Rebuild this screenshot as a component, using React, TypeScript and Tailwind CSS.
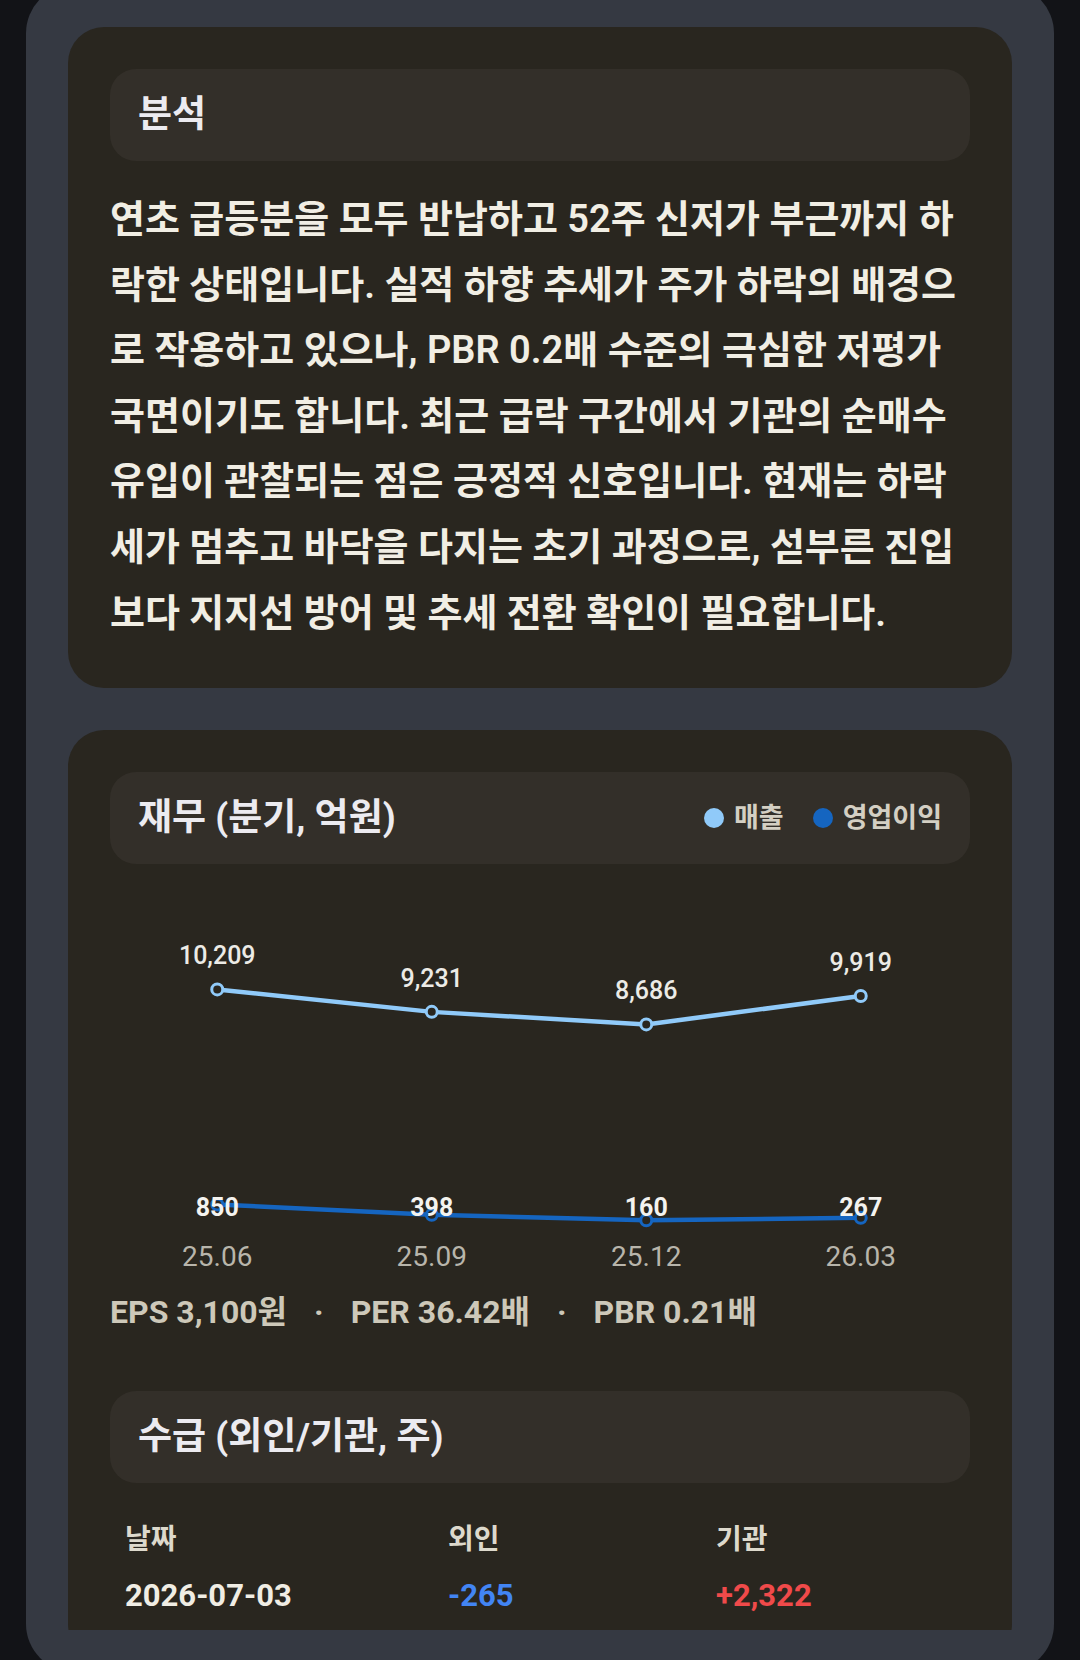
import React from 'react';

const quarters = ['25.06', '25.09', '25.12', '26.03'];
const revenue = [10209, 9231, 8686, 9919];
const opProfit = [850, 398, 160, 267];

const CHART_W = 858;
const CHART_H = 426;
const BASE_Y = 360;
const SCALE = 0.02298;

const xOf = (i: number) => CHART_W / 8 + i * (CHART_W / 4);
const yOf = (v: number) => BASE_Y - v * SCALE;
const fmt = (v: number) => v.toLocaleString('en-US');

const SectionHeader: React.FC<{ title: string; children?: React.ReactNode }> = ({ title, children }) => (
  <div className="flex h-[92px] items-center justify-between rounded-[26px] bg-[#332f29] px-[28px]">
    <h2 className="text-[37px] font-bold text-[#ecebf0]">{title}</h2>
    {children}
  </div>
);

const LegendItem: React.FC<{ color: string; label: string }> = ({ color, label }) => (
  <div className="flex items-center gap-[10px]">
    <span className={`h-[20px] w-[20px] rounded-full ${color}`} />
    <span className="text-[27px] font-bold text-[#d4cfc3]">{label}</span>
  </div>
);

const FinanceChart: React.FC = () => {
  const line = (values: number[]) => values.map((v, i) => `${xOf(i)},${yOf(v)}`).join(' ');

  return (
    <svg width={CHART_W} height={CHART_H} className="block">
      {/* revenue line */}
      <polyline points={line(revenue)} fill="none" stroke="#90caf9" strokeWidth={4.5} strokeLinejoin="round" />
      {revenue.map((v, i) => (
        <circle key={i} cx={xOf(i)} cy={yOf(v)} r={5.5} fill="#29261f" stroke="#90caf9" strokeWidth={3} />
      ))}

      {/* operating profit line */}
      <polyline points={line(opProfit)} fill="none" stroke="#1565c0" strokeWidth={4.5} strokeLinejoin="round" />
      {opProfit.map((v, i) => (
        <circle key={i} cx={xOf(i)} cy={yOf(v)} r={5.5} fill="#29261f" stroke="#1565c0" strokeWidth={3} />
      ))}

      {/* value labels */}
      {revenue.map((v, i) => (
        <text key={i} x={xOf(i)} y={yOf(v) - 34 + 9} textAnchor="middle" fontSize={25} fontWeight={500} fill="#ecebe6">
          {fmt(v)}
        </text>
      ))}
      {opProfit.map((v, i) => (
        <text key={i} x={xOf(i)} y={352} textAnchor="middle" fontSize={25} fontWeight={700} fill="#f4f3ef">
          {fmt(v)}
        </text>
      ))}

      {/* quarter axis */}
      {quarters.map((q, i) => (
        <text key={q} x={xOf(i)} y={402} textAnchor="middle" fontSize={28} fill="#b8b5ab">
          {q}
        </text>
      ))}
    </svg>
  );
};

export default function App() {
  return (
    <div className="h-[1660px] overflow-hidden bg-[#121317] px-[26px] font-[Roboto,'Noto_Sans_CJK_KR',sans-serif]">
      <div className="-mt-[15px] rounded-[48px] bg-[#353942] p-[42px]">
        <div className="flex h-[1603px] flex-col gap-[42px] overflow-hidden">
          {/* Analysis */}
          <section className="shrink-0 rounded-[36px] bg-[#29261f] p-[42px]">
            <SectionHeader title="분석" />
            <p className="mt-[26px] text-[38px] font-semibold leading-[65.6px] text-[#f1eee4]">
              연초 급등분을 모두 반납하고 52주 신저가 부근까지 하락한 상태입니다. 실적 하향 추세가 주가 하락의 배경으로 작용하고 있으나, PBR 0.2배 수준의 극심한 저평가 국면이기도 합니다. 최근 급락 구간에서 기관의 순매수 유입이 관찰되는 점은 긍정적 신호입니다. 현재는 하락세가 멈추고 바닥을 다지는 초기 과정으로, 섣부른 진입보다 지지선 방어 및 추세 전환 확인이 필요합니다.
            </p>
          </section>

          {/* Financials + supply */}
          <section className="shrink-0 rounded-[36px] bg-[#29261f] p-[42px]">
            <SectionHeader title="재무 (분기, 억원)">
              <div className="flex items-center gap-[29px]">
                <LegendItem color="bg-[#90caf9]" label="매출" />
                <LegendItem color="bg-[#1565c0]" label="영업이익" />
              </div>
            </SectionHeader>

            <FinanceChart />

            <div className="flex items-center gap-[27px] text-[32px] font-bold leading-[45px] text-[#cdc8b9]">
              <span>EPS 3,100원</span>
              <span>·</span>
              <span>PER 36.42배</span>
              <span>·</span>
              <span>PBR 0.21배</span>
            </div>

            <div className="mt-[56px]">
              <SectionHeader title="수급 (외인/기관, 주)" />
            </div>

            <div className="mt-[36px] pl-[15px]">
              <div className="grid grid-cols-[323px_268px_1fr] text-[28px] font-bold leading-[42px] text-[#ddd9cc]">
                <span>날짜</span>
                <span>외인</span>
                <span>기관</span>
              </div>
              <div className="mt-[12px] grid grid-cols-[323px_268px_1fr] text-[31px] font-bold leading-[45px]">
                <span className="text-[#f0ede4]">2026-07-03</span>
                <span className="text-[#4285f4]">-265</span>
                <span className="text-[#f04a4a]">+2,322</span>
              </div>
            </div>
          </section>
        </div>
      </div>
    </div>
  );
}
